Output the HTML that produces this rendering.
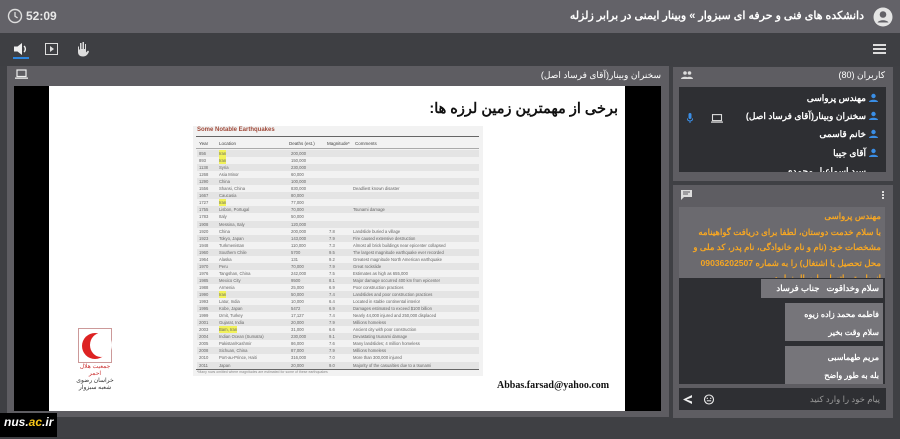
<!DOCTYPE html>
<html><head><meta charset="utf-8"><style>
*{margin:0;padding:0;box-sizing:border-box}
body{width:900px;height:439px;overflow:hidden;background:#3f4044;font-family:"Liberation Sans","Noto Sans CJK SC",sans-serif;position:relative}
.a{position:absolute}
.rtl{direction:rtl}
</style></head><body>
<!-- top bar -->
<div class="a" style="left:0;top:0;width:900px;height:33px;background:#636268"></div>
<svg class="a" style="left:7px;top:8px" width="16" height="16" viewBox="0 0 16 16"><circle cx="8" cy="8" r="6.5" fill="none" stroke="#ddd" stroke-width="1.4"/><path d="M8 4v4.3l2.6 1.6" fill="none" stroke="#ddd" stroke-width="1.3"/></svg>
<div class="a" style="left:26px;top:9px;font-size:12px;color:#e8e8e8;font-weight:bold">52:09</div>
<div class="a rtl" style="right:36px;top:9px;font-size:11px;color:#fff;font-weight:bold">دانشکده های فنی و حرفه ای سبزوار » وبینار ایمنی در برابر زلزله</div>
<svg class="a" style="left:873px;top:7px" width="20" height="20" viewBox="0 0 20 20"><circle cx="10" cy="10" r="9.5" fill="#e4e4e4"/><circle cx="10" cy="7.5" r="3.3" fill="#636268"/><path d="M4.5 15.5c1.5-3 9.5-3 11 0" fill="#636268"/></svg>
<!-- toolbar -->
<div class="a" style="left:0;top:33px;width:900px;height:33px;background:#3e3f43"></div>
<svg class="a" style="left:13px;top:42px" width="16" height="14" viewBox="0 0 16 14"><path d="M1 4.5h3.5L9 1v12L4.5 9.5H1z" fill="#eee"/><path d="M11 4a4 4 0 0 1 0 6" fill="none" stroke="#eee" stroke-width="1.4"/></svg>
<div class="a" style="left:13px;top:57px;width:16px;height:2px;background:#2e86de"></div>
<div class="a" style="left:45px;top:43px;width:13px;height:12px;border:1.4px solid #ddd"></div>
<div class="a" style="left:50px;top:46px;width:0;height:0;border-left:4px solid #ddd;border-top:3px solid transparent;border-bottom:3px solid transparent"></div>
<svg class="a" style="left:76px;top:41px" width="14" height="16" viewBox="0 0 14 16"><path d="M2 6v5c0 3 2 4.5 5 4.5s5-2 6-5l-1-1-2 2V3H9v5H8V1H6.5v7h-1V2H4v6.5H3V5z" fill="#ddd"/></svg>
<div class="a" style="left:873px;top:44px;width:13px;height:2px;background:#ddd;box-shadow:0 4px 0 #ddd,0 8px 0 #ddd"></div>
<!-- left panel -->
<div class="a" style="left:7px;top:66px;width:662px;height:351px;background:#5e5d62"></div>
<svg class="a" style="left:15px;top:69px" width="13" height="11" viewBox="0 0 13 11"><rect x="2" y="1" width="9" height="6.5" fill="none" stroke="#eee" stroke-width="1.2"/><rect x="0" y="8.5" width="13" height="1.3" fill="#eee"/></svg>
<div class="a rtl" style="right:239px;top:70px;font-size:9px;color:#fff">سخنران وبینار(آقای فرساد اصل)</div>
<div class="a" style="left:14px;top:86px;width:647px;height:325px;background:#000"></div>
<div class="a" style="left:49px;top:86px;width:576px;height:325px;background:#fff"></div>
<div class="a rtl" style="right:282px;top:101px;font-size:14.5px;font-weight:bold;color:#111">برخی از مهمترین زمین لرزه ها:</div>
<div class="a" style="left:497px;top:380px;font-size:10px;font-weight:bold;color:#111;font-family:'Liberation Serif',serif">Abbas.farsad@yahoo.com</div>
<!-- table -->
<div class="a" style="left:193px;top:126px;width:290px;height:250px;background:#f2f2f2">
<div class="a" style="left:4px;top:1px;font-size:6px;color:#a04a3a;font-weight:bold">Some Notable Earthquakes</div>
<div class="a" style="left:3px;top:10px;width:283px;height:1px;background:#666"></div>
<div class="a" style="left:6px;top:15px;width:282px;font-size:4.5px;color:#444;white-space:nowrap"><span class="a" style="left:0">Year</span><span class="a" style="left:20px">Location</span><span class="a" style="left:90px">Deaths (est.)</span><span class="a" style="left:128px">Magnitude*</span><span class="a" style="left:156px">Comments</span></div>
<div class="a" style="left:3px;top:22px;width:283px;height:1px;background:#aaa"></div>
<div class="a" style="left:3px;top:243px;width:283px;height:1px;background:#666"></div>
<div class="a" style="left:4px;top:244px;font-size:3.5px;color:#888;white-space:nowrap">*Many rows omitted where magnitudes are estimated for some of these earthquakes</div>
</div>
<div id="rows"></div>
<!-- slide logo -->
<div class="a" style="left:78px;top:328px;width:34px;height:35px;border:1px solid #c99;background:#fff"></div>
<div class="a" style="left:82px;top:333px;width:26px;height:26px;border-radius:50%;background:#d22"></div>
<div class="a" style="left:90px;top:333px;width:22px;height:24px;border-radius:50%;background:#fff"></div>
<div class="a rtl" style="left:74px;top:364px;width:42px;font-size:6px;color:#c33;text-align:center;line-height:7px">جمعیت هلال احمر<br><span style="color:#333">خراسان رضوی<br>شعبه سبزوار</span></div>
<!-- bottom logo -->
<div class="a" style="left:0;top:413px;width:57px;height:24px;background:#000"></div>
<div class="a" style="left:4px;top:415px;font-size:12px;font-weight:bold;font-style:italic;color:#fff">nus.<span style="color:#f5c518">ac</span>.ir</div>
<!-- right upper panel -->
<div class="a" style="left:673px;top:67px;width:220px;height:114px;background:#5e5d62"></div>
<svg class="a" style="left:681px;top:71px" width="12" height="8" viewBox="0 0 12 8"><circle cx="4" cy="2" r="1.8" fill="#ddd"/><circle cx="8.5" cy="2" r="1.8" fill="#ddd"/><path d="M0 8c0-3 8-3 8 0zM5 8c0-3 7-3 7 0z" fill="#ddd"/></svg>
<div class="a rtl" style="right:15px;top:70px;font-size:9px;color:#fff">کاربران (80)</div>
<div class="a" style="left:679px;top:87px;width:207px;height:85px;background:#2e2f33;overflow:hidden">
<div class="a rtl" style="right:20px;top:6px;font-size:9px;color:#fff;font-weight:bold">مهندس پرواسی</div>
<div class="a rtl" style="right:20px;top:24px;font-size:9px;color:#fff;font-weight:bold">سخنران وبینار(آقای فرساد اصل)</div>
<div class="a rtl" style="right:20px;top:42px;font-size:9px;color:#fff;font-weight:bold">خانم قاسمی</div>
<div class="a rtl" style="right:20px;top:61px;font-size:9px;color:#fff;font-weight:bold">آقای جیبا</div>
<div class="a rtl" style="right:20px;top:79px;font-size:9px;color:#fff;font-weight:bold">سید اسماعیل محمدی</div>
<svg class="a" style="left:190px;top:6px" width="9" height="70" viewBox="0 0 9 70"><g fill="#3a8ee6"><circle cx="4.5" cy="3" r="2.2"/><path d="M0 9c0-3 9-3 9 0z"/><circle cx="4.5" cy="21" r="2.2"/><path d="M0 27c0-3 9-3 9 0z"/><circle cx="4.5" cy="39" r="2.2"/><path d="M0 45c0-3 9-3 9 0z"/><circle cx="4.5" cy="58" r="2.2"/><path d="M0 64c0-3 9-3 9 0z"/></g></svg>
<svg class="a" style="left:8px;top:26px" width="6" height="10" viewBox="0 0 6 10"><rect x="1.5" y="0" width="3" height="6" rx="1.5" fill="#3a8ee6"/><path d="M0 5a3 3 0 0 0 6 0M3 8v2" stroke="#3a8ee6" fill="none"/></svg>
<svg class="a" style="left:32px;top:27px" width="12" height="9" viewBox="0 0 12 9"><rect x="1.5" y="0.6" width="9" height="6" fill="none" stroke="#ddd" stroke-width="1.1"/><rect x="0" y="7.5" width="12" height="1.2" fill="#ddd"/></svg>
</div>
<!-- right lower panel -->
<div class="a" style="left:673px;top:185px;width:220px;height:233px;background:#5e5d62"></div>
<svg class="a" style="left:681px;top:190px" width="11" height="10" viewBox="0 0 11 10"><path d="M0 0h11v7H3L0 10z" fill="#ddd"/><path d="M2 2h7M2 4h5" stroke="#5e5d62"/></svg>
<div class="a" style="left:882px;top:191px;width:2px;height:2px;background:#ddd;box-shadow:0 3px 0 #ddd,0 6px 0 #ddd"></div>
<div class="a" style="left:679px;top:207px;width:206px;height:177px;background:#2e2f33;overflow:hidden">
<div class="a rtl" style="left:0;top:0;width:206px;height:71px;background:#6b6a6f;padding:2px 4px;font-size:8.6px;line-height:15.5px;color:#f5a623;font-weight:bold;white-space:nowrap;overflow:hidden">مهندس پرواسی<br>با سلام خدمت دوستان، لطفا برای دریافت گواهینامه<br>مشخصات خود (نام و نام خانوادگی، نام پدر، کد ملی و<br>محل تحصیل یا اشتغال) را به شماره 09036202507<br>از طریق واتساپ ارسال نمایید</div>
<div class="a rtl" style="left:82px;top:72px;width:122px;height:19px;background:#76757a;font-size:8.5px;color:#fff;padding:4px 4px;font-weight:bold">سلام وخداقوت &nbsp; جناب فرساد</div>
<div class="a rtl" style="left:106px;top:96px;width:98px;height:38px;background:#76757a;font-size:8px;color:#fff;padding:3px 4px;line-height:18px;font-weight:bold">فاطمه محمد زاده زیوه<br>سلام وقت بخیر</div>
<div class="a rtl" style="left:106px;top:139px;width:98px;height:38px;background:#76757a;font-size:8px;color:#fff;padding:3px 4px;line-height:18px;font-weight:bold">مریم طهماسبی<br>بله به طور واضح</div>
</div>
<div class="a" style="left:679px;top:388px;width:207px;height:22px;background:#2e2f33"></div>
<div class="a rtl" style="right:20px;top:394px;font-size:8.5px;color:#999">پیام خود را وارد کنید</div>
<svg class="a" style="left:683px;top:394px" width="32" height="11" viewBox="0 0 32 11"><path d="M0 5.5L9 1v2.5L3.5 5.5 9 7.5V10z" fill="#eee"/><circle cx="26" cy="5.5" r="4.5" fill="none" stroke="#eee" stroke-width="1.1"/><circle cx="24.3" cy="4.3" r=".7" fill="#eee"/><circle cx="27.7" cy="4.3" r=".7" fill="#eee"/><path d="M23.8 6.8h4.4" stroke="#eee"/></svg>
<script>
var d=[["856","Iran","200,000","",""],["893","Iran","150,000","",""],["1138","Syria","230,000","",""],["1268","Asia Minor","60,000","",""],["1290","China","100,000","",""],["1556","Shansi, China","830,000","","Deadliest known disaster"],["1667","Caucasia","80,000","",""],["1727","Iran","77,000","",""],["1755","Lisbon, Portugal","70,000","","Tsunami damage"],["1783","Italy","50,000","",""],["1908","Messina, Italy","120,000","",""],["1920","China","200,000","7.8","Landslide buried a village"],["1923","Tokyo, Japan","143,000","7.9","Fire caused extensive destruction"],["1948","Turkmenistan","110,000","7.3","Almost all brick buildings near epicenter collapsed"],["1960","Southern Chile","5700","9.5","The largest magnitude earthquake ever recorded"],["1964","Alaska","131","9.2","Greatest magnitude North American earthquake"],["1970","Peru","70,000","7.9","Great rockslide"],["1976","Tangshan, China","242,000","7.5","Estimates as high as 655,000"],["1985","Mexico City","9500","8.1","Major damage occurred 400 km from epicenter"],["1988","Armenia","25,000","6.9","Poor construction practices"],["1990","Iran","50,000","7.4","Landslides and poor construction practices"],["1993","Latur, India","10,000","6.4","Located in stable continental interior"],["1995","Kobe, Japan","5472","6.9","Damages estimated to exceed $100 billion"],["1999","Izmit, Turkey","17,127","7.4","Nearly 44,000 injured and 250,000 displaced"],["2001","Gujarat, India","20,000","7.9","Millions homeless"],["2003","Bam, Iran","31,000","6.6","Ancient city with poor construction"],["2004","Indian Ocean (Sumatra)","230,000","9.1","Devastating tsunami damage"],["2005","Pakistan/Kashmir","86,000","7.6","Many landslides; 4 million homeless"],["2008","Sichuan, China","87,000","7.9","Millions homeless"],["2010","Port-au-Prince, Haiti","316,000","7.0","More than 300,000 injured"],["2011","Japan","20,000","9.0","Majority of the casualties due to a tsunami"]];
var h='';d.forEach(function(r,i){var y=150+i*7.05;var bg=i%2?'':'background:#e4e4e4;';var hl=r[1].indexOf('Iran')>=0?'background:#f2f25a;':'';h+='<div class="a" style="left:197px;top:'+y+'px;width:282px;height:7px;'+bg+'font-size:4.2px;color:#666;white-space:nowrap;line-height:7px"><span class="a" style="left:2px">'+r[0]+'</span><span class="a" style="left:22px;'+hl+'">'+r[1]+'</span><span class="a" style="left:94px">'+r[2]+'</span><span class="a" style="left:132px">'+r[3]+'</span><span class="a" style="left:156px">'+r[4]+'</span></div>'});document.getElementById('rows').innerHTML=h;
</script>
</body></html>
